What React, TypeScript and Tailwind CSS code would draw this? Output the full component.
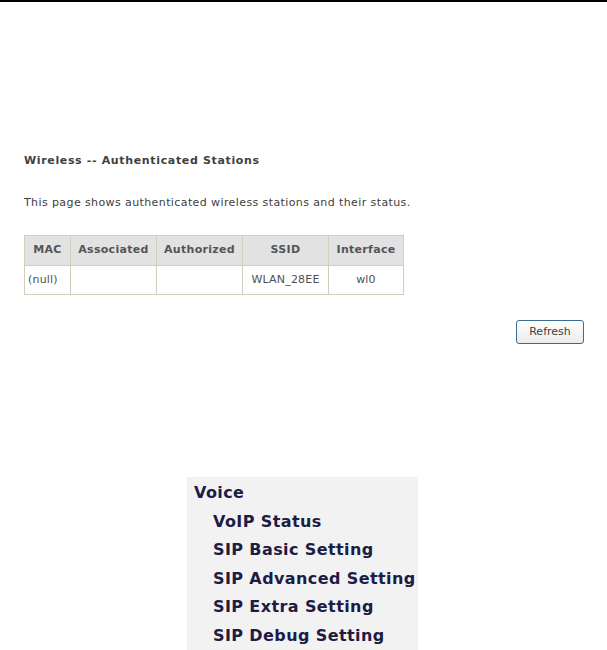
import React from 'react';

const menuItems = ['VoIP Status', 'SIP Basic Setting', 'SIP Advanced Setting', 'SIP Extra Setting', 'SIP Debug Setting'];

const headers = ['MAC', 'Associated', 'Authorized', 'SSID', 'Interface'];
const colWidths = ['w-[46px]', 'w-[86px]', 'w-[86px]', 'w-[86px]', 'w-[75px]'];
const row = ['(null)', '', '', 'WLAN_28EE', 'wl0'];

function App() {
  return (
    <div className="h-[650px] w-[607px] bg-white overflow-hidden font-['DejaVu_Sans',sans-serif]">
      <div className="h-[2px] bg-black"></div>

      <div className="pl-[24px] pt-[151px]">
        <h1 className="text-[11px] font-bold text-[#404040] tracking-[0.65px]">Wireless -- Authenticated Stations</h1>
        <p className="mt-[25px] text-[11px] text-[#404040] tracking-[0.4px]">
          This page shows authenticated wireless stations and their status.
        </p>

        <table className="mt-[24px] border-collapse border border-[#c8c8b4] text-[11px] text-[#404040]">
          <thead>
            <tr className="bg-[#e2e2e2]">
              {headers.map((h, i) => (
                <th
                  key={h}
                  className={`${colWidths[i]} h-[30px] border border-[#cfcfbe] px-[3px] font-semibold text-center text-[#555555] tracking-[0.3px]`}
                >
                  {h}
                </th>
              ))}
            </tr>
          </thead>
          <tbody>
            <tr className="bg-white">
              {row.map((c, i) => (
                <td
                  key={i}
                  className={`h-[29px] border border-[#cfcfbe] px-[3px] ${i === 0 ? 'text-left' : 'text-center'} text-[#505050] tracking-[0.2px]`}
                >
                  {c}
                </td>
              ))}
            </tr>
          </tbody>
        </table>
      </div>

      <div className="flex justify-end pr-[23px] mt-[25px]">
        <button className="h-[24px] w-[68px] rounded-[3px] border border-[#3b6a96] bg-gradient-to-b from-white to-[#ebebeb] text-[11px] text-[#404040]">
          Refresh
        </button>
      </div>

      <div className="ml-[187px] mt-[133px] w-[231px] h-[190px] bg-[#f2f2f2] pt-[2px] pl-[7px] font-['DejaVu_Sans',sans-serif] font-bold text-[16px] tracking-[0.4px] text-[#1c1c44]">
        <div className="h-[28.5px] leading-[28px]">Voice</div>
        {menuItems.map((m) => (
          <div key={m} className="h-[28.5px] leading-[28px] pl-[19px] whitespace-nowrap">
            {m}
          </div>
        ))}
      </div>
    </div>
  );
}

export default App;
